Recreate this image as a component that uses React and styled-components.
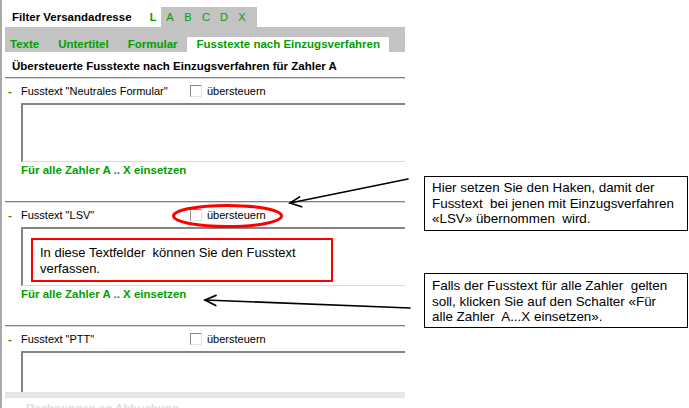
import React from "react";
import styled, { createGlobalStyle } from "styled-components";

const GlobalStyle = createGlobalStyle`
  html, body { margin: 0; padding: 0; background: #fff; }
  body { font-family: "Liberation Sans", Arial, sans-serif; }
  #root { width: 689px; height: 408px; }
`;

const GREEN = "#00a000";
const TABGRAY = "#c3c3c3";

const Page = styled.div`
  position: relative;
  width: 689px;
  height: 408px;
  overflow: hidden;
  background: #fff;
  box-shadow: inset 2px 0 0 #a9a9a9;
`;

const Panel = styled.div`
  margin-left: 5px;
  width: 400px;
  height: 408px;
  padding-top: 7px;
  box-sizing: border-box;
  display: flex;
  flex-direction: column;
  overflow: hidden;
`;

const FilterRow = styled.div`
  display: flex;
  flex-shrink: 0;
  height: 20px;
  line-height: 20px;
  font-size: 11.5px;
`;

const FilterLabel = styled.div`
  width: 133px;
  padding-left: 7px;
  font-weight: bold;
  color: #000;
`;

const LetterGroup = styled.div`
  display: flex;
  background: ${TABGRAY};
  padding-right: ${(p) => (p.$pad ? 6 : 0)}px;
`;

const LetterTab = styled.div`
  width: ${(p) => (p.$active ? 16 : 18)}px;
  text-align: center;
  font-size: 11px;
  color: ${GREEN};
  font-weight: ${(p) => (p.$active ? "bold" : "normal")};
  background: ${(p) => (p.$active ? "#fff" : TABGRAY)};
`;

const TabBar = styled.div`
  display: flex;
  flex-shrink: 0;
  align-items: flex-end;
  height: 25px;
  padding-left: 5px;
  background: ${TABGRAY};
`;

const Tab = styled.div`
  height: 15px;
  line-height: 14px;
  padding: 0 9.5px;
  font-size: 11.5px;
  font-weight: bold;
  color: ${GREEN};
  white-space: nowrap;
  background: ${(p) => (p.$active ? "#fff" : "transparent")};
  &:first-child {
    padding-left: 0;
  }
`;

const Heading = styled.div`
  flex-shrink: 0;
  padding: 3px 0 0 7px;
  line-height: 22px;
  font-size: 11.5px;
  font-weight: bold;
  color: #000;
  white-space: nowrap;
`;

const SectionList = styled.div`
  flex-shrink: 0;
  height: 315px;
  overflow: hidden;
  display: flex;
  flex-direction: column;
`;

const Section = styled.div`
  flex-shrink: 0;
  height: 124px;
  box-sizing: border-box;
  border-top: 1px solid #808080;
  box-shadow: inset 0 1px 0 #d8d8d8;
  padding-left: 3px;
`;

const Row = styled.div`
  display: flex;
  align-items: center;
  height: 25px;
  font-size: 11px;
  color: #000;
  white-space: nowrap;
`;

const Marker = styled.span`
  width: 13px;
  font-weight: bold;
  font-size: 11.5px;
  color: ${GREEN};
`;

const Label = styled.span`
  width: 169px;
`;

const Check = styled.span`
  width: 12px;
  height: 12px;
  box-sizing: border-box;
  margin-right: 5px;
  background: #fff;
  border-top: 1px solid #8a8a8a;
  border-left: 1px solid #8a8a8a;
  border-right: 1px solid #e2e2e2;
  border-bottom: 1px solid #e2e2e2;
`;

const Field = styled.div`
  margin-left: 13px;
  width: 400px;
  height: 59px;
  box-sizing: border-box;
  background: #fff;
  border-top: 2px solid #858585;
  border-left: 2px solid #858585;
  border-bottom: 1px solid #dadada;
`;

const ApplyLink = styled.div`
  margin: 1px 0 0 13px;
  line-height: 14px;
  font-size: 11.5px;
  font-weight: bold;
  color: ${GREEN};
  white-space: nowrap;
`;

const BottomStrip = styled.div`
  flex-shrink: 0;
  height: 6px;
  background: #e6e6e6;
`;

const FooterText = styled.div`
  padding: 3px 0 0 21px;
  line-height: 14px;
  font-size: 11.5px;
  font-weight: bold;
  color: #e0e0e0;
  white-space: nowrap;
`;

const Callout = styled.div`
  position: absolute;
  left: ${(p) => p.$x}px;
  top: ${(p) => p.$y}px;
  width: 264px;
  height: 55px;
  box-sizing: border-box;
  border: 1px solid #000;
  background: #fff;
  padding: ${(p) => p.$pt}px 0 0 7px;
  font-size: 13.4px;
  line-height: 15.5px;
  color: #000;
  white-space: pre;
`;

const RedNote = styled.div`
  position: absolute;
  left: 31px;
  top: 238px;
  width: 302px;
  height: 44px;
  box-sizing: border-box;
  border: 2px solid #ff0000;
  background: #fff;
  padding: 5px 0 0 7px;
  font-size: 13px;
  line-height: 16px;
  color: #000;
  white-space: pre;
`;

const Overlay = styled.svg`
  position: absolute;
  left: 0;
  top: 0;
  width: 689px;
  height: 408px;
  pointer-events: none;
`;

const sections = [
  { title: 'Fusstext "Neutrales Formular"' },
  { title: 'Fusstext "LSV"' },
  { title: 'Fusstext "PTT"' },
];

export default function App() {
  return (
    <>
      <GlobalStyle />
      <Page>
        <Panel>
          <FilterRow>
            <FilterLabel>Filter Versandadresse</FilterLabel>
            <LetterTab $active>L</LetterTab>
            <LetterGroup $pad>
              {["A", "B", "C", "D", "X"].map((l) => (
                <LetterTab key={l}>{l}</LetterTab>
              ))}
            </LetterGroup>
          </FilterRow>
          <TabBar>
            <Tab>Texte</Tab>
            <Tab>Untertitel</Tab>
            <Tab>Formular</Tab>
            <Tab $active>Fusstexte nach Einzugsverfahren</Tab>
          </TabBar>
          <Heading>Übersteuerte Fusstexte nach Einzugsverfahren für Zahler A</Heading>
          <SectionList>
            {sections.map((s) => (
              <Section key={s.title}>
                <Row>
                  <Marker>-</Marker>
                  <Label>{s.title}</Label>
                  <Check />
                  <span>übersteuern</span>
                </Row>
                <Field />
                <ApplyLink>Für alle Zahler A .. X einsetzen</ApplyLink>
              </Section>
            ))}
          </SectionList>
          <BottomStrip />
          <FooterText>Rechnungen an Abbuchung</FooterText>
        </Panel>

        <RedNote>{"In diese Textfelder  können Sie den Fusstext\nverfassen."}</RedNote>

        <Callout $x={424} $y={176} $pt={3}>
          {"Hier setzen Sie den Haken, damit der\nFusstext  bei jenen mit Einzugsverfahren\n«LSV» übernommen  wird."}
        </Callout>
        <Callout $x={424} $y={273} $pt={4}>
          {"Falls der Fusstext für alle Zahler  gelten\nsoll, klicken Sie auf den Schalter «Für\nalle Zahler  A...X einsetzen»."}
        </Callout>

        <Overlay viewBox="0 0 689 408">
          <ellipse cx="227.5" cy="216" rx="54" ry="10.5" fill="none" stroke="#ff0000" strokeWidth="3" />
          <g stroke="#000" strokeWidth="1.7" fill="none" strokeLinecap="round">
            <line x1="408" y1="179" x2="290" y2="203" />
            <polyline points="299.6,196.9 290,203 301.7,206.8" />
            <line x1="410" y1="308" x2="205" y2="300" />
            <polyline points="216,295.4 205,300 215.7,305.5" />
          </g>
        </Overlay>
      </Page>
    </>
  );
}
